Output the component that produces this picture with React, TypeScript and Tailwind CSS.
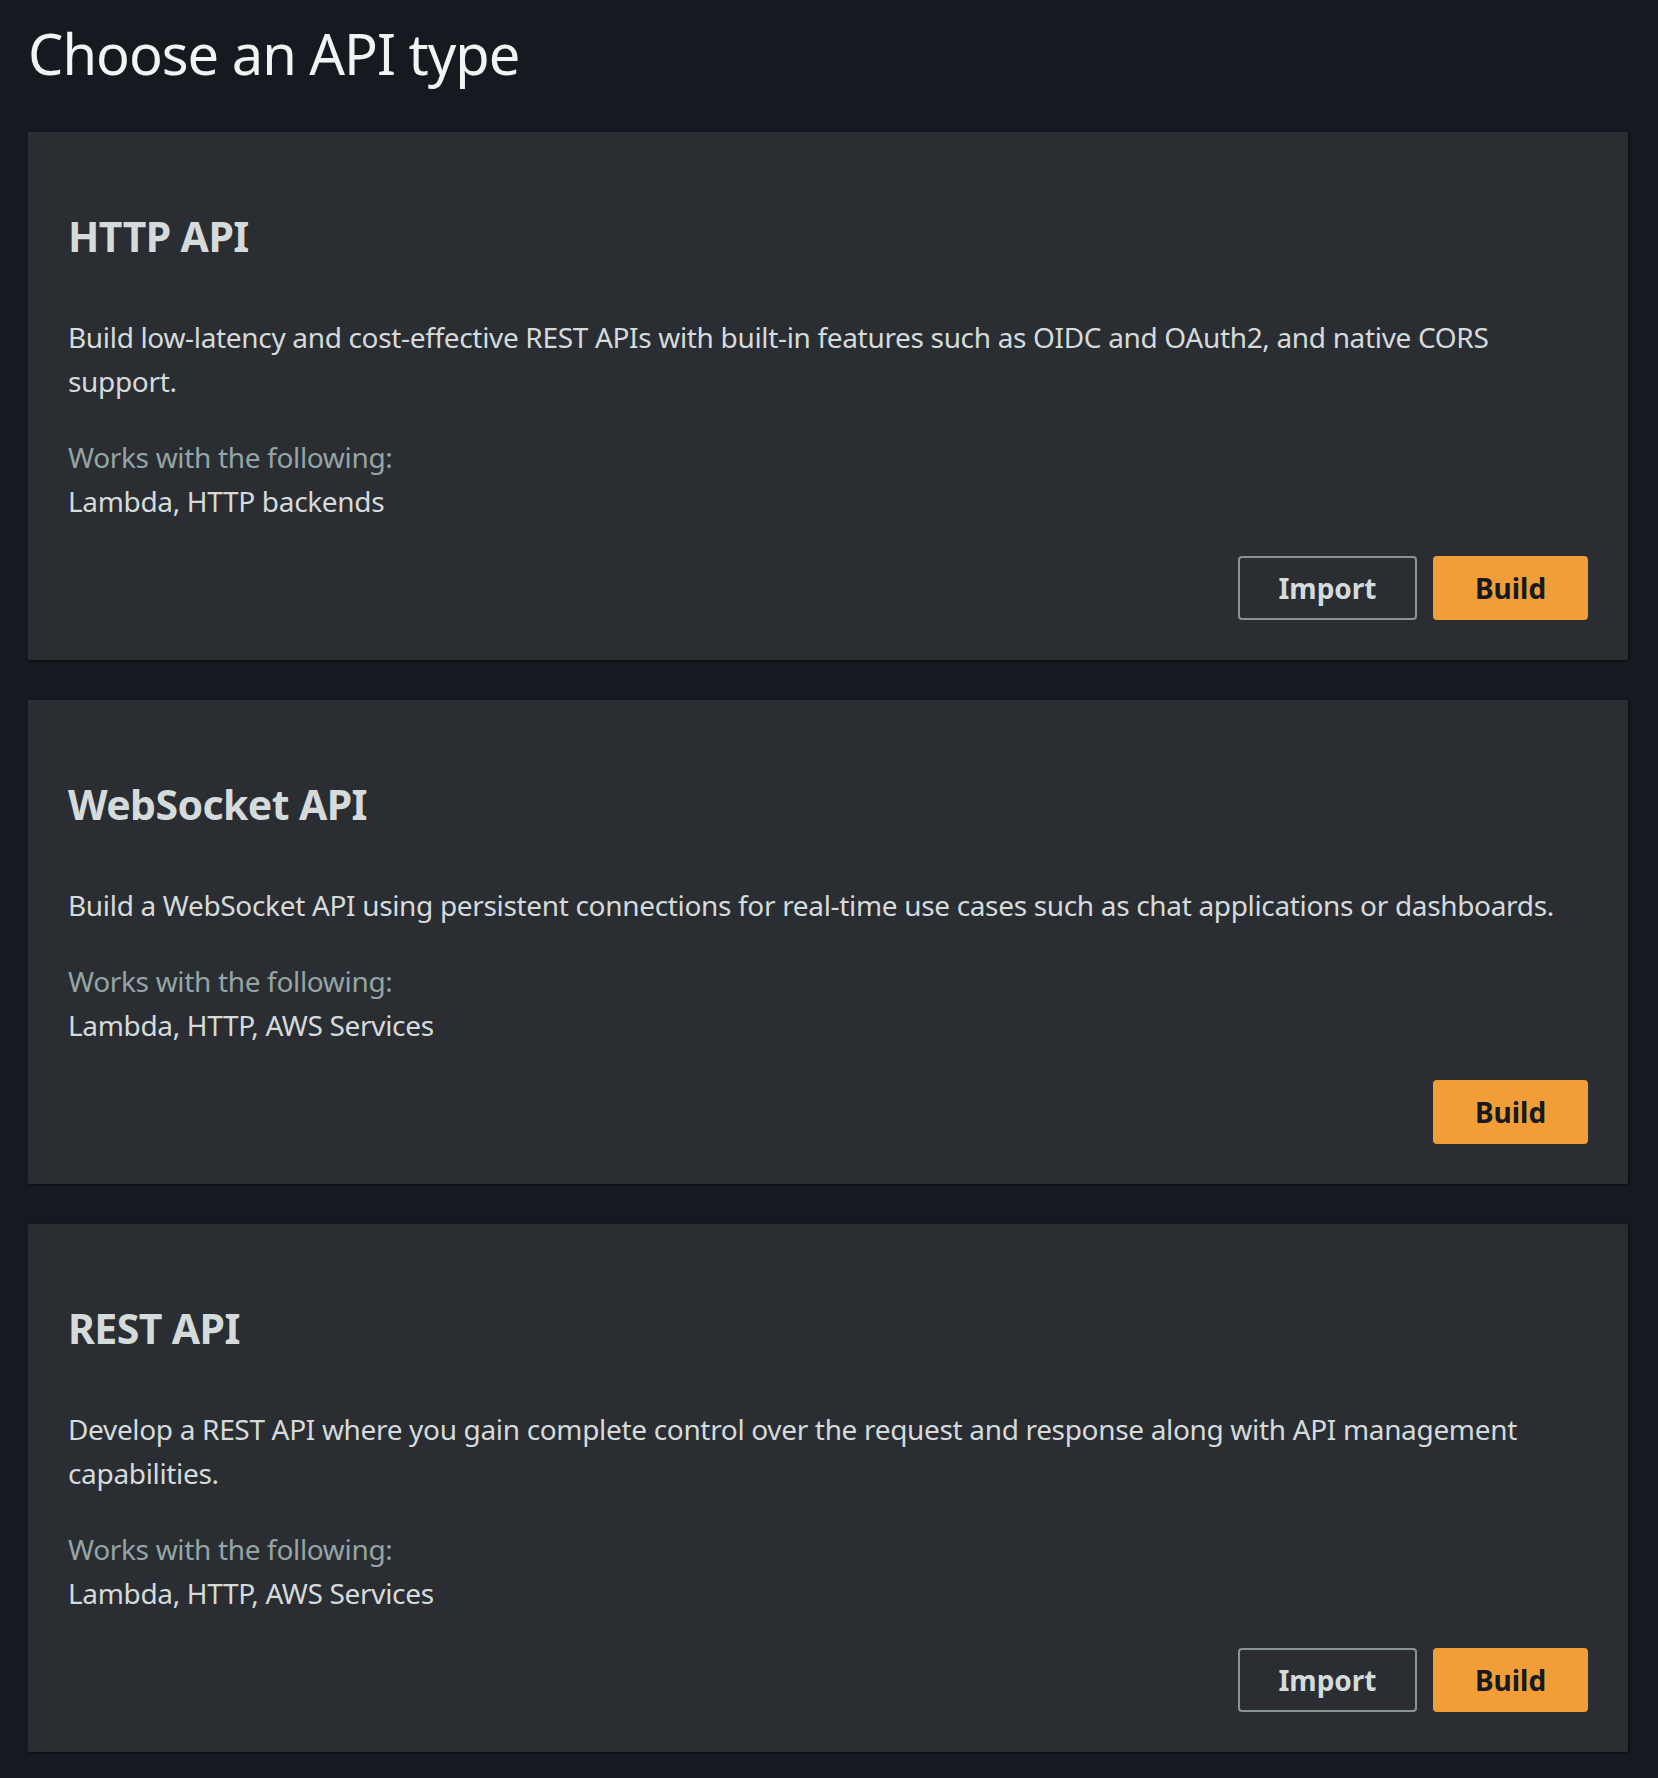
import React from "react";

type Card = {
  title: string;
  desc: string;
  works: string;
  importBtn: boolean;
};

const cards: Card[] = [
  {
    title: "HTTP API",
    desc: "Build low-latency and cost-effective REST APIs with built-in features such as OIDC and OAuth2, and native CORS support.",
    works: "Lambda, HTTP backends",
    importBtn: true,
  },
  {
    title: "WebSocket API",
    desc: "Build a WebSocket API using persistent connections for real-time use cases such as chat applications or dashboards.",
    works: "Lambda, HTTP, AWS Services",
    importBtn: false,
  },
  {
    title: "REST API",
    desc: "Develop a REST API where you gain complete control over the request and response along with API management capabilities.",
    works: "Lambda, HTTP, AWS Services",
    importBtn: true,
  },
];

function ApiCard({ card }: { card: Card }) {
  return (
    <div className="bg-[#2a2e33] rounded-[2px] shadow-[1px_1px_2px_0_rgba(0,0,0,0.55)] px-[40px] pt-[76px] pb-[40px]">
      <h2 className="text-[41px] leading-[56px] font-bold tracking-[-0.6px] text-[#d5dbdb]">{card.title}</h2>
      <p className="mt-[51px] text-[28px] leading-[44px] tracking-[-0.33px] text-[#d5dbdb]">{card.desc}</p>
      <div className="mt-[32px] text-[28px] leading-[44px] tracking-[-0.33px] text-[#95a5a6]">Works with the following:</div>
      <div className="text-[28px] leading-[44px] tracking-[-0.33px] text-[#d5dbdb]">{card.works}</div>
      <div className="mt-[33px] flex justify-end gap-[16px]">
        {card.importBtn && (
          <button className="w-[179px] h-[64px] rounded-[4px] border-2 border-[#879596] text-[28px] font-bold text-[#d5dbdb] flex items-center justify-center">
            Import
          </button>
        )}
        <button className="w-[155px] h-[64px] rounded-[4px] bg-[#f29e38] text-[28px] font-bold text-[#16191f] flex items-center justify-center">
          Build
        </button>
      </div>
    </div>
  );
}

export default function App() {
  return (
    <div
      className="min-h-[1778px] bg-[#16191f] pl-[28px] pr-[30px] pt-[17px]"
      style={{ fontFamily: '"Noto Sans", "Open Sans", Arial, sans-serif' }}
    >
      <h1 className="text-[56px] leading-[72px] font-normal tracking-[-1px] text-[#f2f3f3]">Choose an API type</h1>
      <div className="mt-[43px] flex flex-col gap-[40px]">
        {cards.map((c) => (
          <ApiCard key={c.title} card={c} />
        ))}
      </div>
    </div>
  );
}
